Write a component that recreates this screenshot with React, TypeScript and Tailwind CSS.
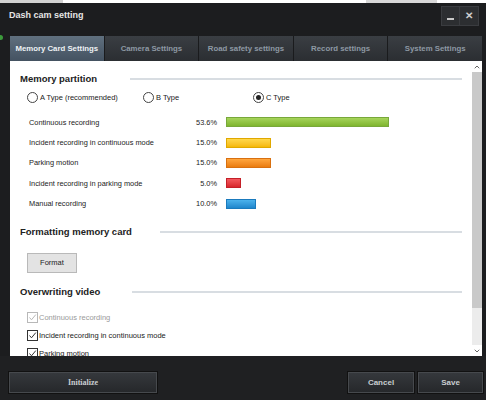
import { ChevronUp, ChevronDown } from "lucide-react";

const SANS = "font-['Liberation_Sans',Arial,sans-serif]";

const PARTITIONS = [
  { label: "Continuous recording", pct: "53.6%", w: 163, bar: "bg-gradient-to-b from-[#a6d45a] to-[#7fb52e] border-[#78a83a]" },
  { label: "Incident recording in continuous mode", pct: "15.0%", w: 45, bar: "bg-gradient-to-b from-[#ffd84a] to-[#f5b800] border-[#e0a800]" },
  { label: "Parking motion", pct: "15.0%", w: 45, bar: "bg-gradient-to-b from-[#ffa63d] to-[#ea7c0c] border-[#d87010]" },
  { label: "Incident recording in parking mode", pct: "5.0%", w: 15, bar: "bg-gradient-to-b from-[#f4585e] to-[#d8252c] border-[#c42028]" },
  { label: "Manual recording", pct: "10.0%", w: 30, bar: "bg-gradient-to-b from-[#4bb2ec] to-[#1e86cc] border-[#1a7abd]" },
];

const TABS = ["Memory Card Settings", "Camera Settings", "Road safety settings", "Record settings", "System Settings"];

function SectionTitle({ title, lineFrom }: { title: string; lineFrom: number }) {
  return (
    <div className="flex items-center pl-[10px] pr-[10px]">
      <span className="w-0 whitespace-nowrap text-[9.5px] font-bold text-[#222]" style={{ minWidth: lineFrom }}>
        {title}
      </span>
      <div className="h-[2px] flex-1 bg-[#d8dde2]" />
    </div>
  );
}

function Radio({ label, checked }: { label: string; checked?: boolean }) {
  return (
    <div className="flex items-center gap-[2px]">
      <span className="flex h-[11px] w-[11px] items-center justify-center rounded-full border border-[#444] bg-white">
        {checked && <span className="h-[5px] w-[5px] rounded-full bg-[#222]" />}
      </span>
      <span className="text-[7.5px] text-[#222]">{label}</span>
    </div>
  );
}

function Check({ label, disabled }: { label: string; disabled?: boolean }) {
  const c = disabled ? "#b8b8b8" : "#333";
  return (
    <div className="flex h-[18px] items-center gap-[1px] pl-[17px]">
      <span className="flex h-[11px] w-[11px] items-center justify-center border bg-white" style={{ borderColor: c }}>
        <svg width="9" height="9" viewBox="0 0 9 9">
          <path d="M1.5 4.5 L3.5 6.8 L7.8 1.6" fill="none" stroke={c} strokeWidth="1" />
        </svg>
      </span>
      <span className={disabled ? "text-[7.5px] text-[#9a9a9a]" : "text-[7.5px] text-[#222]"}>{label}</span>
    </div>
  );
}

function DarkButton({ children, className, serif }: { children: string; className: string; serif?: boolean }) {
  return (
    <div
      className={`flex h-[21px] items-center justify-center border border-[#46494d] bg-gradient-to-b from-[#35383c] to-[#26282b] text-[8px] font-bold text-[#c9cdd1] shadow-[0_0_0_1px_#111] ${
        serif ? "font-['Liberation_Serif',serif]" : ""
      } ${className}`}
    >
      {children}
    </div>
  );
}

export default function App() {
  return (
    <div className={`h-[400px] w-[488px] overflow-hidden bg-white antialiased ${SANS}`}>
      <div className="flex h-[3px]">
        <div className="w-[63px] bg-[#d2d2d2]" />
        <div className="w-[303px]" />
        <div className="w-[71px] bg-[#d8d8d8]" />
      </div>
      <div className="relative flex h-[397px] w-[486px] flex-col bg-[#1c1d1f]">
        <span className="absolute left-[-2px] top-[32px] h-[5px] w-[5px] rounded-full bg-[#3c9a3c]" />
        {/* title bar */}
        <div className="flex h-[26px] items-center justify-between pl-[9px] pr-[7px]">
          <span className="text-[9px] font-bold text-[#e6e6e6]">Dash cam setting</span>
          <div className="flex">
            <div className="flex h-[20px] w-[19px] items-center justify-center border border-[#3a3c40] bg-[#2c2e31]">
              <span className="mt-[5px] h-[2px] w-[7px] bg-[#c8c8c8]" />
            </div>
            <div className="flex h-[20px] w-[19px] items-center justify-center border border-l-0 border-[#3a3c40] bg-[#2c2e31] text-[10px] font-bold leading-none text-[#cfcfcf]">
              ✕
            </div>
          </div>
        </div>
        {/* tabs */}
        <div className="mt-[7px] flex h-[25px] pl-[10px] pr-[4px]">
          {TABS.map((t, i) => (
            <div
              key={t}
              className={
                i === 0
                  ? "flex flex-1 items-center justify-center bg-gradient-to-b from-[#60707f] to-[#445261] text-[7.8px] font-bold text-[#eef2f5]"
                  : "flex flex-1 items-center justify-center border-l border-[#1a1b1d] bg-gradient-to-b from-[#3a3e43] to-[#2b2e32] text-[7.8px] font-bold text-[#8e99a4]"
              }
            >
              {t}
            </div>
          ))}
        </div>
        {/* content */}
        <div className="ml-[10px] mr-[4px] flex h-[295px] overflow-hidden bg-white">
          <div className="flex-1 pt-[11px]">
            <SectionTitle title="Memory partition" lineFrom={110} />
            <div className="mt-[4px] flex h-[14px] items-center pl-[17px]">
              <div className="w-[116px]"><Radio label="A Type (recommended)" /></div>
              <div className="w-[110px]"><Radio label="B Type" /></div>
              <Radio label="C Type" checked />
            </div>
            <div className="mt-[8px] flex flex-col">
              {PARTITIONS.map((p) => (
                <div key={p.label} className="flex h-[20.3px] items-center pl-[19px]">
                  <span className="w-[160px] text-[7.4px] text-[#222]">{p.label}</span>
                  <span className="w-[28px] text-right text-[7.4px] text-[#222]">{p.pct}</span>
                  <span className={`ml-[9px] h-[10px] border ${p.bar}`} style={{ width: p.w }} />
                </div>
              ))}
            </div>
            <div className="mt-[11px]">
              <SectionTitle title="Formatting memory card" lineFrom={140} />
            </div>
            <div className="mt-[14px] pl-[17px]">
              <div className="flex h-[20px] w-[50px] items-center justify-center border border-[#b9b9b9] bg-[#e3e3e3] text-[7.5px] text-[#222]">
                Format
              </div>
            </div>
            <div className="mt-[12px]">
              <SectionTitle title="Overwriting video" lineFrom={112} />
            </div>
            <div className="mt-[9px] flex flex-col">
              <Check label="Continuous recording" disabled />
              <Check label="Incident recording in continuous mode" />
              <Check label="Parking motion" />
            </div>
          </div>
          {/* scrollbar */}
          <div className="flex w-[10px] flex-col bg-[#ececec]">
            <div className="flex h-[11px] items-center justify-center bg-white">
              <ChevronUp size={8} strokeWidth={3} className="text-[#666]" />
            </div>
            <div className="h-[236px] bg-[#c9c9c9]" />
            <div className="flex-1" />
            <div className="flex h-[11px] items-center justify-center bg-white">
              <ChevronDown size={8} strokeWidth={3} className="text-[#666]" />
            </div>
          </div>
        </div>
        {/* bottom bar */}
        <div className="flex flex-1 items-start bg-[#1f2022] pl-[9px] pr-[3px] pt-[16px]">
          <DarkButton className="w-[148px]" serif>Initialize</DarkButton>
          <div className="flex-1" />
          <DarkButton className="w-[66px]">Cancel</DarkButton>
          <DarkButton className="ml-[4px] w-[65px]">Save</DarkButton>
        </div>
      </div>
    </div>
  );
}
